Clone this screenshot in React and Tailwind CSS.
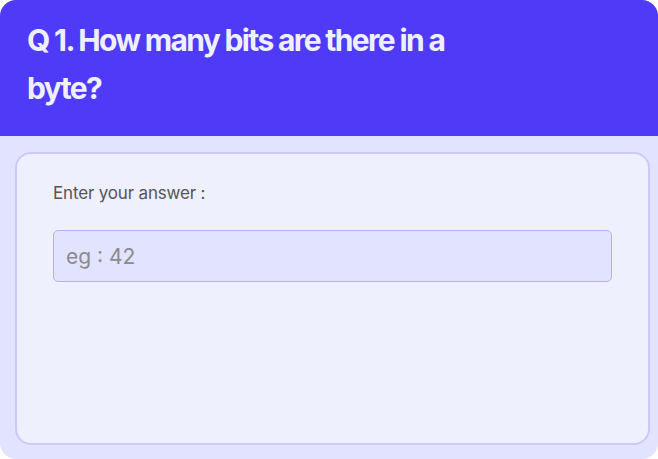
import React from 'react';

const App = () => {
  return (
    <div className="w-[658px] h-[459px] rounded-[16px] overflow-hidden bg-[#e2e3fe] flex flex-col" style={{ fontFamily: 'Inter, "Noto Sans", sans-serif' }}>
      <div className="h-[136px] bg-[#4f3af7] px-[27px] pt-[16px]">
        <h1 className="w-[430px] text-[30px] leading-[48px] font-bold tracking-[-0.055em] text-[#eef0ff]">
          Q 1. How many bits are there in a byte?
        </h1>
      </div>
      <div className="flex-1 px-[15px] pt-[16px] pb-[14px] flex">
        <div className="flex-1 rounded-[16px] border-2 border-[#c9cafb] bg-[#eef0fe] px-[36px] pt-[28px]">
          <label className="block text-[17px] leading-[22px] text-[#555] tracking-[-0.01em]">
            Enter your answer :
          </label>
          <input
            type="text"
            placeholder="eg : 42"
            className="mt-[26px] w-[559px] h-[52px] rounded-[5px] border border-[#aeb0fa] bg-[#e2e3fe] px-[12px] text-[21px] text-[#555] placeholder:text-[#8a8a90] outline-none"
          />
        </div>
      </div>
    </div>
  );
};

export default App;
